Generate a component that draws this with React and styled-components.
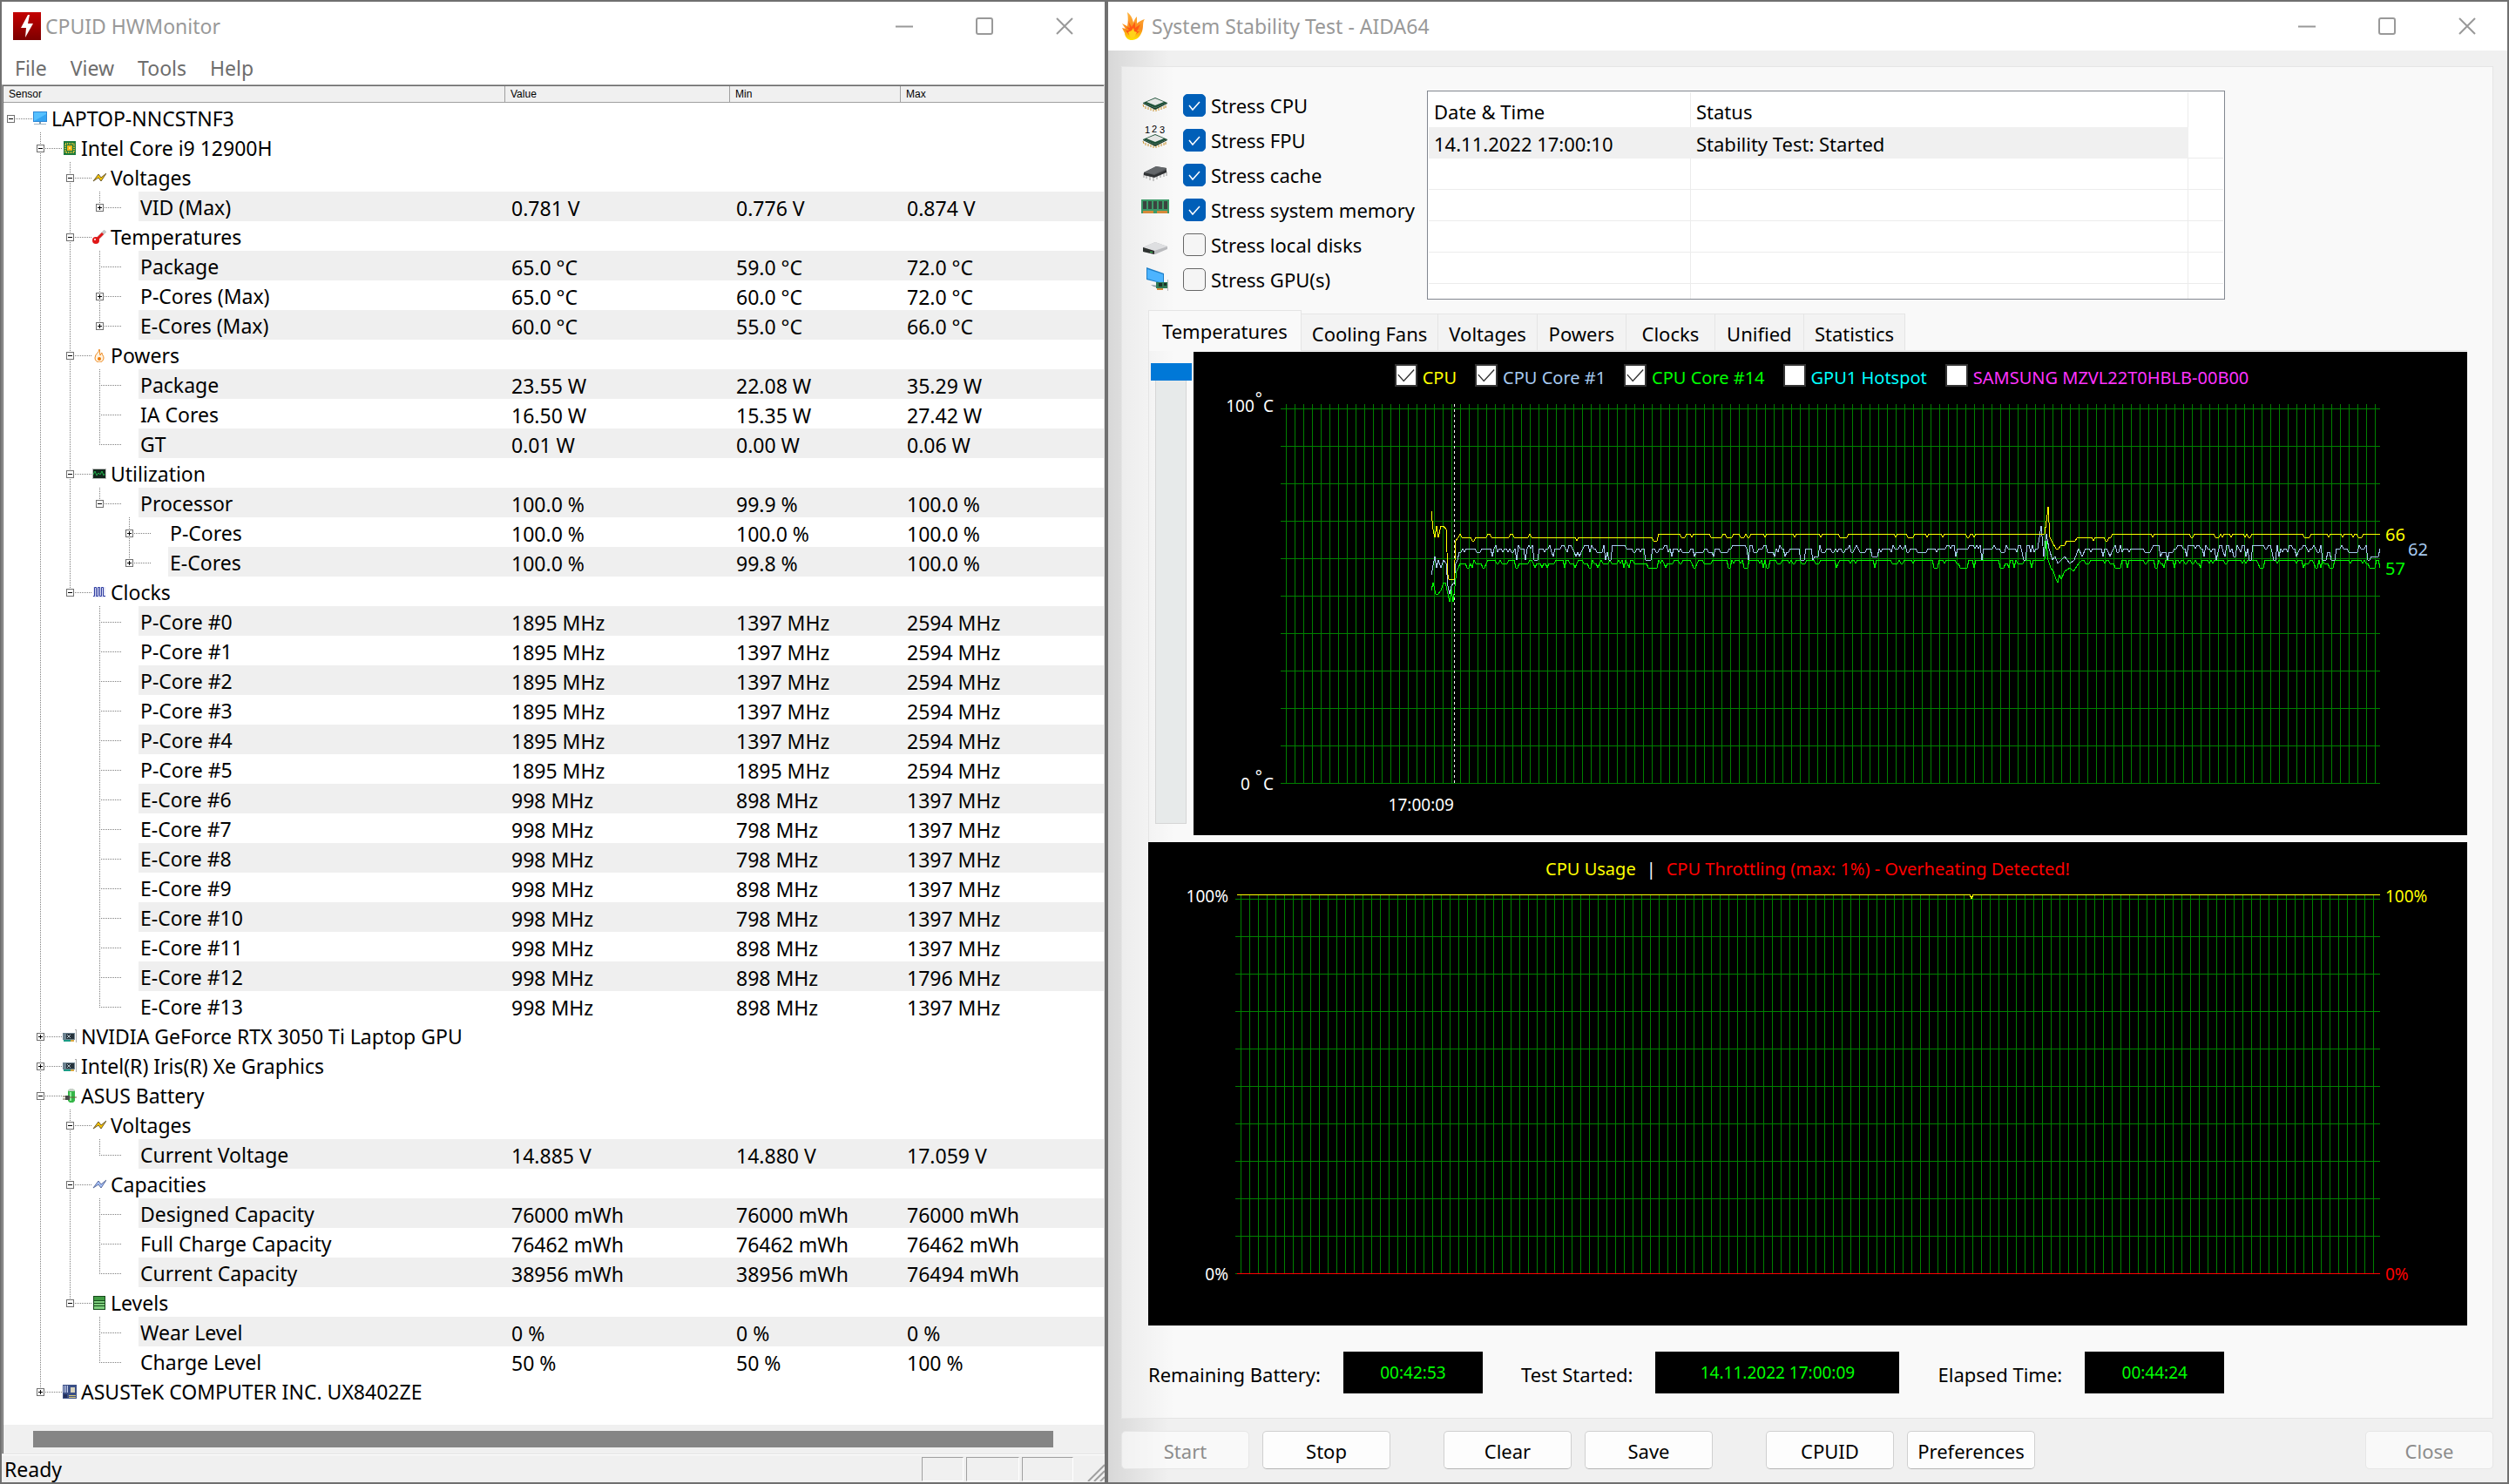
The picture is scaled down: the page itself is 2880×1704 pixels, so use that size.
import React from 'react';
import styled, { createGlobalStyle, css } from 'styled-components';

const GlobalStyle = createGlobalStyle`
	* {
		box-sizing: border-box;
	}

	body {
		margin: 0;
		background: #707070;
		color: #000;
		font-family: 'Noto Sans', 'Open Sans', sans-serif;
		font-size: 22px;
		line-height: 28px;
	}

	button,
	input {
		font: inherit;
		color: inherit;
		margin: 0;
	}
`;

/* ---------- shared window parts ---------- */

const Desktop = styled.main`
	display: grid;
	grid-template-columns: 1270fr 1610fr;
	min-height: 100vh;
`;

const Window = styled.section`
	display: flex;
	flex-direction: column;
	min-width: 0;
	border: 2px solid #707070;
	background: ${props => props.$bg};
`;

const TitleBar = styled.header`
	display: flex;
	align-items: center;
	height: 56px;
	padding-left: ${props => props.$pad}px;
	background: #fff;

	h1 {
		flex: 1;
		margin: 0 0 0 ${props => props.$gap}px;
		font-size: 23px;
		font-weight: 400;
		color: #999;
	}
`;

const CaptionButton = styled.button`
	width: 92px;
	height: 54px;
	padding: 0;
	border: 0;
	background: none;

	svg {
		display: block;
		margin: 0 auto;
	}
`;

const captionShapes = {
	Minimize: <path d="M0 10.5h20" strokeWidth="2" />,
	Maximize: <rect x="1" y="1" width="18" height="18" rx="2" strokeWidth="2" />,
	Close: <path d="M1 1l18 18M19 1L1 19" strokeWidth="2" />,
};

function Caption({ pad, gap, icon, title }) {
	return (
		<TitleBar $pad={pad} $gap={gap}>
			{icon}
			<h1>{title}</h1>
			{Object.keys(captionShapes).map(name => (
				<CaptionButton key={name} type="button" aria-label={name}>
					<svg width="20" height="20" fill="none" stroke="#999">
						{captionShapes[name]}
					</svg>
				</CaptionButton>
			))}
		</TitleBar>
	);
}

/* ---------- HWMonitor ---------- */

const BoltLogo = () => (
	<svg width="32" height="32" viewBox="0 0 32 32">
		<defs>
			<linearGradient id="bolt" x1="0" y1="0" x2="0" y2="1">
				<stop offset="0" stopColor="#c40000" />
				<stop offset="1" stopColor="#7c0000" />
			</linearGradient>
		</defs>
		<rect width="32" height="32" fill="url(#bolt)" />
		<path d="M17 3L9 18h6l-1 11 9-16h-6l2-10z" fill="#fff" />
	</svg>
);

const zigzag = (fill, stroke) => (
	<path d="M1 12L7 4l3 4 6-5-6 9-3-4z" fill={fill} stroke={stroke} />
);

const card = (
	<>
		<path d="M14 0h2v15h-1V1h-1z" fill="#aaa" />
		<path d="M0 4h14v8H0z" fill="#6c8290" />
		<path d="M4 5h9v6H4z" fill="#26323b" />
		<path d="M5 6l4 4m0-4l-4 4" stroke="#b7c4cc" />
		<path d="M1 12h8v2H1z" fill="#1b9b85" />
		<path d="M9 12h4v2H9z" fill="#d8a640" />
	</>
);

const treeIcons = {
	computer: (
		<>
			<path d="M0 0h16v12H0z" fill="#2d87d6" />
			<path d="M1 1h14v10H1z" fill="#55c0ff" />
			<path d="M1 11L15 3v8z" fill="#35a5f2" />
			<path d="M7 12h2v2H7z" fill="#7f99ab" />
			<path d="M1 14h14v1H1z" fill="#9fb5c4" />
		</>
	),
	cpu: (
		<>
			<path d="M1 0h14v16H1z" fill="#1d7a3c" />
			<path d="M3 3h10v10H3z" fill="none" stroke="#d9c53c" strokeWidth="2" strokeDasharray="1 1" />
			<path d="M5 5h6v6H5z" fill="#f2b416" />
			<path d="M7 7h2v2H7z" fill="#fbe17b" />
		</>
	),
	volt: zigzag('#ffc800', '#6b5a2c'),
	capacity: zigzag('#a9c4ff', '#57699a'),
	temp: (
		<>
			<path d="M15 1L7 9" stroke="#c9c9c9" strokeWidth="4" />
			<path d="M12 4L5 11" stroke="#e01818" strokeWidth="3" />
			<circle cx="4" cy="12" r="4" fill="#e01818" />
			<circle cx="3" cy="11" r="1" fill="#fff" />
		</>
	),
	power: (
		<>
			<path
				d="M8 1c0 4-5 5-5 10a5 5 0 0 0 10 0c0-3-2-3-2-6-2 1-1 3-2 3-1-2 0-4-1-7z"
				fill="#fff3e0"
				stroke="#ee8a20"
			/>
			<circle cx="8" cy="12" r="2" fill="#f07800" />
		</>
	),
	usage: (
		<>
			<path d="M0 2h16v12H0z" fill="#bdbdbd" />
			<path d="M1 3h14v10H1z" fill="#12261c" />
			<path d="M1 9l2-4 2 5 2-3 2 2 2-4 2 5 1-2" fill="none" stroke="#1fb24a" />
		</>
	),
	clock: (
		<>
			<path d="M1 2h14v12H1z" fill="#e4e6f8" />
			<path
				d="M1 12.5h1.5v-10h2v10h2v-10h2v10h2v-10h2v10H15"
				fill="none"
				stroke="#2c3a9e"
			/>
		</>
	),
	gpu: card,
	battery: (
		<>
			<path d="M7 1h6l1 2v11l-2 2H8l-2-2V3z" fill="#35b548" />
			<path d="M8 0h4l2 3H6z" fill="#c8d0c8" />
			<path d="M8 4h2v10H8z" fill="#8ff09a" />
			<path d="M3 8h5v5H3z" fill="#4a4a4a" />
			<path d="M0 9h3M0 12h3M8 10h8" stroke="#6b5a3a" />
		</>
	),
	levels: (
		<>
			<path d="M1 0h14v16H1z" fill="#164a1b" />
			<path d="M2 1h12v4H2z" fill="#3f9a42" />
			<path d="M2 6h12v2H2zm0 3h12v2H2zm0 3h12v3H2z" fill="#7fd07e" />
		</>
	),
	board: (
		<>
			<path d="M0 0h16v16H0z" fill="#3b4f86" />
			<path d="M1 1h1v8H1zm2 0h1v8H3zm2 0h1v8H5z" fill="#c9d3ef" />
			<path d="M9 3h5v6H9z" fill="#d8d3bd" />
			<path d="M1 11h4v4H1z" fill="#22305c" />
			<path d="M7 12h8v1H7zm0 2h8v1H7z" fill="#d9c97a" />
		</>
	),
};

const clockRow = (name, value, min, max) => ({
	name,
	values: [`${value} MHz`, `${min} MHz`, `${max} MHz`],
});

const sensors = {
	name: 'LAPTOP-NNCSTNF3',
	icon: 'computer',
	children: [
		{
			name: 'Intel Core i9 12900H',
			icon: 'cpu',
			children: [
				{
					name: 'Voltages',
					icon: 'volt',
					children: [{ name: 'VID (Max)', folded: true, values: ['0.781 V', '0.776 V', '0.874 V'] }],
				},
				{
					name: 'Temperatures',
					icon: 'temp',
					children: [
						{ name: 'Package', values: ['65.0 °C', '59.0 °C', '72.0 °C'] },
						{ name: 'P-Cores (Max)', folded: true, values: ['65.0 °C', '60.0 °C', '72.0 °C'] },
						{ name: 'E-Cores (Max)', folded: true, values: ['60.0 °C', '55.0 °C', '66.0 °C'] },
					],
				},
				{
					name: 'Powers',
					icon: 'power',
					children: [
						{ name: 'Package', values: ['23.55 W', '22.08 W', '35.29 W'] },
						{ name: 'IA Cores', values: ['16.50 W', '15.35 W', '27.42 W'] },
						{ name: 'GT', values: ['0.01 W', '0.00 W', '0.06 W'] },
					],
				},
				{
					name: 'Utilization',
					icon: 'usage',
					children: [
						{
							name: 'Processor',
							values: ['100.0 %', '99.9 %', '100.0 %'],
							children: [
								{ name: 'P-Cores', folded: true, values: ['100.0 %', '100.0 %', '100.0 %'] },
								{ name: 'E-Cores', folded: true, values: ['100.0 %', '99.8 %', '100.0 %'] },
							],
						},
					],
				},
				{
					name: 'Clocks',
					icon: 'clock',
					children: [
						clockRow('P-Core #0', 1895, 1397, 2594),
						clockRow('P-Core #1', 1895, 1397, 2594),
						clockRow('P-Core #2', 1895, 1397, 2594),
						clockRow('P-Core #3', 1895, 1397, 2594),
						clockRow('P-Core #4', 1895, 1397, 2594),
						clockRow('P-Core #5', 1895, 1895, 2594),
						clockRow('E-Core #6', 998, 898, 1397),
						clockRow('E-Core #7', 998, 798, 1397),
						clockRow('E-Core #8', 998, 798, 1397),
						clockRow('E-Core #9', 998, 898, 1397),
						clockRow('E-Core #10', 998, 798, 1397),
						clockRow('E-Core #11', 998, 898, 1397),
						clockRow('E-Core #12', 998, 898, 1796),
						clockRow('E-Core #13', 998, 898, 1397),
					],
				},
			],
		},
		{ name: 'NVIDIA GeForce RTX 3050 Ti Laptop GPU', icon: 'gpu', folded: true },
		{ name: 'Intel(R) Iris(R) Xe Graphics', icon: 'gpu', folded: true },
		{
			name: 'ASUS Battery',
			icon: 'battery',
			children: [
				{
					name: 'Voltages',
					icon: 'volt',
					children: [{ name: 'Current Voltage', values: ['14.885 V', '14.880 V', '17.059 V'] }],
				},
				{
					name: 'Capacities',
					icon: 'capacity',
					children: [
						{ name: 'Designed Capacity', values: ['76000 mWh', '76000 mWh', '76000 mWh'] },
						{ name: 'Full Charge Capacity', values: ['76462 mWh', '76462 mWh', '76462 mWh'] },
						{ name: 'Current Capacity', values: ['38956 mWh', '38956 mWh', '76494 mWh'] },
					],
				},
				{
					name: 'Levels',
					icon: 'levels',
					children: [
						{ name: 'Wear Level', values: ['0 %', '0 %', '0 %'] },
						{ name: 'Charge Level', values: ['50 %', '50 %', '100 %'] },
					],
				},
			],
		},
		{ name: 'ASUSTeK COMPUTER INC. UX8402ZE', icon: 'board', folded: true },
	],
};

// depth-first list of rows; guides holds one flag per ancestor level
function flatten(node, guides = [], last = true, root = true) {
	const row = { ...node, guides, last, root };
	const kids = node.children || [];
	const next = root ? [] : [...guides, !last];
	return [
		row,
		...kids.flatMap((kid, i) => flatten(kid, root ? [false] : next, i === kids.length - 1, false)),
	];
}

const rows = flatten(sensors);

const MenuBar = styled.nav`
	display: flex;
	align-items: center;
	gap: 23px;
	height: 37px;
	padding: 2px 0 0 13px;
	font-size: 23px;

	button {
		padding: 0 2px;
		border: 0;
		background: none;
		color: #6d6d6d;
	}
`;

const TreePane = styled.div`
	flex: 1;
	display: flex;
	flex-direction: column;
	margin-top: 2px;
	border: solid #a0a0a0;
	border-width: 1px 0 0 1px;
	border-right: 1px solid #e3e3e3;
	box-shadow: inset 1px 1px 0 #696969;
	padding: 1px 0 0 1px;
`;

const SensorTable = styled.table`
	width: 100%;
	table-layout: fixed;
	border-collapse: separate;
	border-spacing: 0;
	font-size: 23px;

	th {
		height: 19px;
		padding: 0 6px;
		border-right: 1px solid #a0a0a0;
		border-bottom: 1px solid #a0a0a0;
		background: #f0f0f0;
		font: 12px/16px 'Liberation Sans', Arial, sans-serif;
		text-align: left;
	}

	th:last-child {
		border-right: 0;
	}

	td {
		height: 34px;
		padding: 3px 7px 0;
		line-height: 30px;
		white-space: nowrap;
	}
`;

const SensorRow = styled.tr`
	td:not(:first-child) {
		background: ${props => (props.$shaded ? '#efefef' : '#fff')};
	}

	&& td:first-child {
		padding: 0;
	}
`;

const SensorName = styled.div`
	display: flex;
	height: 34px;
`;

const Label = styled.span`
	flex: 1;
	margin-left: 3px;
	padding: 3px 0 0 2px;
	line-height: 30px;
	background: ${props => (props.$shaded ? '#efefef' : 'none')};
`;

const dots = dir => `repeating-linear-gradient(${dir}, #808080 0 1px, transparent 1px 2px)`;

const Guide = styled.span`
	flex: 0 0 34px;
	background: ${props => (props.$line ? dots('to bottom') : 'none')} 8px 0 / 1px 34px no-repeat;
`;

const Branch = styled.span`
	flex: 0 0 34px;
	padding: 14px 0 0 4px;
	background: ${dots('to right')} 8px 18px / 25px 1px no-repeat,
		${dots('to bottom')} 8px 0 / 1px ${props => props.$drop}px no-repeat;

	${props =>
		props.$root &&
		css`
			background: ${dots('to right')} 14px 18px / 19px 1px no-repeat;
		`}
`;

const Toggle = styled.button`
	display: block;
	width: 9px;
	height: 9px;
	padding: 0;
	border: 0;

	svg {
		display: block;
	}
`;

const TreeIcon = styled.svg`
	flex: 0 0 16px;
	height: 16px;
	margin-top: 10px;
`;

function Row({ row, index }) {
	const shaded = Boolean(row.values) && index % 2 === 1;
	const values = row.values || ['', '', ''];
	return (
		<SensorRow $shaded={shaded}>
			<td>
				<SensorName>
					{row.guides.map((line, i) => (
						<Guide key={i} $line={line} />
					))}
					<Branch $drop={row.last ? 19 : 34} $root={row.root}>
						{(row.children || row.folded) && (
							<Toggle type="button" aria-label={row.folded ? 'Expand' : 'Collapse'}>
								<svg width="9" height="9" shapeRendering="crispEdges">
									<path d="M.5 .5h8v8h-8z" fill="#fff" stroke="#707070" />
									<path d={row.folded ? 'M2 4.5h5M4.5 2v5' : 'M2 4.5h5'} stroke="#000" />
								</svg>
							</Toggle>
						)}
					</Branch>
					<TreeIcon viewBox="0 0 16 16">{row.icon && treeIcons[row.icon]}</TreeIcon>
					<Label $shaded={shaded}>{row.name}</Label>
				</SensorName>
			</td>
			{values.map((value, i) => (
				<td key={i}>{value}</td>
			))}
		</SensorRow>
	);
}

const ScrollTrack = styled.div`
	margin-top: auto;
	height: 33px;
	padding: 7px 58px 7px 34px;
	background: #f0f0f0;
`;

const ScrollThumb = styled.div`
	height: 19px;
	background: #858585;
`;

const StatusBar = styled.footer`
	display: flex;
	gap: 3px;
	height: 33px;
	padding: 3px 0 1px 3px;
	border-top: 1px solid #e3e3e3;
	box-shadow: inset 0 1px 0 #fff;
	background: #f0f0f0;
	font-size: 23px;

	p {
		flex: 1;
		margin: 0;
	}

	svg {
		align-self: flex-end;
		margin-left: 13px;
	}
`;

const StatusCell = styled.span`
	width: ${props => props.$width}px;
	border: 1px solid #a0a0a0;
	border-right-color: #fff;
	border-bottom-color: #fff;
`;

function HardwareMonitor() {
	return (
		<Window $bg="#fff">
			<Caption pad={13} gap={5} icon={<BoltLogo />} title="CPUID HWMonitor" />
			<MenuBar>
				<button type="button">File</button>
				<button type="button">View</button>
				<button type="button">Tools</button>
				<button type="button">Help</button>
			</MenuBar>
			<TreePane>
				<SensorTable>
					<colgroup>
						<col style={{ width: 576 }} />
						<col style={{ width: 258 }} />
						<col style={{ width: 196 }} />
						<col />
					</colgroup>
					<thead>
						<tr>
							<th>Sensor</th>
							<th>Value</th>
							<th>Min</th>
							<th>Max</th>
						</tr>
					</thead>
					<tbody>
						{rows.map((row, i) => (
							<Row key={i} row={row} index={i} />
						))}
					</tbody>
				</SensorTable>
				<ScrollTrack>
					<ScrollThumb />
				</ScrollTrack>
			</TreePane>
			<StatusBar>
				<p>Ready</p>
				<StatusCell $width={48} />
				<StatusCell $width={61} />
				<StatusCell $width={59} />
				<svg width="20" height="20" stroke="#a0a0a0" strokeWidth="2">
					<path d="M1 20L20 1M8 20L20 8M15 20l5-5" />
				</svg>
			</StatusBar>
		</Window>
	);
}

/* ---------- System Stability Test ---------- */

const FlameLogo = () => (
	<svg width="26" height="32" viewBox="0 0 26 32">
		<defs>
			<linearGradient id="flame" x1="0" y1="0" x2="0" y2="1">
				<stop offset="0" stopColor="#ffb43c" />
				<stop offset=".6" stopColor="#f98a1c" />
				<stop offset="1" stopColor="#ffe600" />
			</linearGradient>
		</defs>
		<path
			d="M6 0c5 4 6 8 7 12 1-3 2-5 4-7v8c2-2 5-4 9-5-3 4-1 8-3 14-2 5-4 9-11 10C7 33 3 28 3 24L0 18l4 1-4-6 6 3C7 11 7 5 6 0z"
			fill="url(#flame)"
		/>
		<path d="M7 10l4 7 4-6v7l6-4-4 8 3 0-6 5-6-1-4-5 4 0-3-4 4 1z" fill="#ff5a14" />
		<path d="M7 23l4-2 2-3 1 4 3 1-3 6-4 1z" fill="#ffd21a" />
	</svg>
);

const chip = (
	<>
		<path d="M2 19l1 3m2-1v3m3-2v3m3-2v3m3-2v3m3-3v3m3-4v3m3-4v3m3-4v3m2-4v3" stroke="#c8912c" />
		<path d="M2 17l14-6 14 6-14 6z" fill="#1f5138" />
		<path d="M2 17l14 6 14-6v1l-14 7-14-7z" fill="#173d2a" />
		<path d="M6 16l10-4 10 4-10 4z" fill="#e4e6e4" />
	</>
);

const digitFont = { fontFamily: 'Liberation Sans, Arial, sans-serif', fontSize: 11 };

const stressIcons = {
	cpu: chip,
	fpu: (
		<>
			<g transform="translate(0 2)">{chip}</g>
			<g {...digitFont}>
				<text x="4" y="12">1</text>
				<text x="12" y="11">2</text>
				<text x="21" y="12">3</text>
			</g>
		</>
	),
	cache: (
		<>
			<path d="M3 18v5m3-4v5m4-4v6m4-6v7m4-8v6m4-7v5m4-6v5m3-6v5" stroke="#999" />
			<path d="M3 17L17 10l12 2v4l-14 6-12-2z" fill="#55585b" />
			<path d="M3 17l12 3 14-6v3l-14 6-12-3z" fill="#303234" />
			<path d="M17 10l12 2-14 7-12-2z" fill="#64676a" />
		</>
	),
	memory: (
		<>
			<path d="M0 8h32v16H0z" fill="#3c9a68" />
			<path d="M2 10h4v9H2zm6 0h4v9H8zm6 0h4v9h-4zm6 0h4v9h-4zm6 0h4v9h-4z" fill="#3b4440" />
			<path d="M2 21h12v3H2zm16 0h12v3H18z" fill="#d68a3a" />
		</>
	),
	disk: (
		<>
			<path d="M2 23l14-6 14 5v3l-14 6-14-3z" fill="#b9babd" />
			<path d="M2 23l14-6 14 5-15 5z" fill="#dedfe1" />
			<path d="M2 23l13 4v4L2 28z" fill="#2e3230" />
			<path d="M10 28h3v1h-3z" fill="#3fd05a" />
		</>
	),
	gpu: (
		<>
			<path d="M6 6l20 7v12L6 20z" fill="#1e7fc8" />
			<path d="M7 8l18 6v10L7 19z" fill="#4cb4ff" />
			<path d="M11 26l8 1v2l-5-1z" fill="#8a98a2" />
			<path d="M17 23h13v7H17z" fill="#2f7a55" />
			<path d="M20 24h4v4h-4zm6 0h3v3h-3z" fill="#1d3328" />
			<path d="M18 30h7v2h-7z" fill="#d68a3a" />
			<path d="M30 20h1v13h-1z" fill="#bbb" />
		</>
	),
};

const stressOptions = [
	{ id: 'cpu', label: 'Stress CPU', on: true },
	{ id: 'fpu', label: 'Stress FPU', on: true },
	{ id: 'cache', label: 'Stress cache', on: true },
	{ id: 'memory', label: 'Stress system memory', on: true },
	{ id: 'disk', label: 'Stress local disks', on: false },
	{ id: 'gpu', label: 'Stress GPU(s)', on: false },
];

const tick = (color, d) =>
	`url("data:image/svg+xml,%3Csvg xmlns='http://www.w3.org/2000/svg' viewBox='0 0 24 24'%3E%3Cpath d='${d}' fill='none' stroke='${color}' stroke-width='1.5'/%3E%3C/svg%3E")`;

const TestBody = styled.div`
	flex: 1;
	display: flex;
	flex-direction: column;
	padding: 18px 16px 15px 15px;
	background:
		linear-gradient(to right, rgba(0, 0, 0, 0.1), rgba(0, 0, 0, 0) 70px),
		#f0f0f0;
`;

const Panel = styled.div`
	flex: 1;
	padding: 24px 29px 0 22px;
	border: 1px solid #e5e5e5;
	background:
		linear-gradient(to right, rgba(0, 0, 0, 0.05), rgba(0, 0, 0, 0) 60px),
		#f9f9f9;
`;

const Setup = styled.div`
	display: flex;
	align-items: flex-start;
`;

const StressList = styled.div`
	flex: 0 0 328px;
`;

const StressOption = styled.label`
	display: flex;
	align-items: center;
	height: 40px;
	white-space: nowrap;

	svg {
		align-self: flex-start;
		flex: none;
		margin-right: 16px;
	}

	input {
		appearance: none;
		flex: none;
		width: 26px;
		height: 26px;
		margin-right: 6px;
		border: 1px solid #666;
		border-radius: 5px;
		background: #f5f5f5;
	}

	input:checked {
		border-color: #005fb8;
		background: ${tick('white', 'M6 12l4 5 8-9')} #005fb8;
	}
`;

const LogFrame = styled.div`
	flex: 0 1 916px;
	height: 240px;
	margin-top: 3px;
	padding: 1px;
	overflow: hidden;
	border: 1px solid #828790;
	background: #fff;
`;

const Log = styled.table`
	width: 100%;
	table-layout: fixed;
	border-collapse: separate;
	border-spacing: 0;

	th,
	td {
		height: 36px;
		padding: 3px 6px 0;
		border-right: 1px solid #ececec;
		border-bottom: 1px solid #ececec;
		font-weight: 400;
		text-align: left;
	}

	th {
		height: 40px;
		border-bottom: 0;
	}

	th:last-child,
	td:last-child {
		border-right: 0;
	}

	.selected td:not(:last-child) {
		border-color: #f0f0f0;
		background: #f0f0f0;
	}
`;

const TabList = styled.div`
	display: flex;
	align-items: flex-end;
	height: 46px;
	margin: 12px 0 0 8px;
`;

const Tab = styled.button`
	min-width: 102px;
	height: 42px;
	padding: 3px 12px 0;
	border: 1px solid #e5e5e5;
	border-width: 1px 1px 0 0;
	background: #f3f3f3;

	&[aria-selected='true'] {
		z-index: 1;
		height: 47px;
		margin-bottom: -1px;
		padding: 0 15px;
		border-left-width: 1px;
		background: #f9f9f9;
	}
`;

const TabPanel = styled.div`
	display: flex;
	height: 565px;
	margin-left: 8px;
	padding: 1px 0 8px 1px;
	border: solid #e5e5e5;
	border-width: 1px 0 0 1px;
`;

const ZoomSlider = styled.input`
	appearance: none;
	writing-mode: vertical-lr;
	flex: none;
	width: 47px;
	height: 529px;
	margin: 13px 3px 0 0;
	background: none;

	&::-webkit-slider-runnable-track {
		width: 36px;
		height: 529px;
		border: 1px solid #d6d6d6;
		background: #e7eaea;
	}

	&::-webkit-slider-thumb {
		appearance: none;
		width: 47px;
		height: 20px;
		margin: -1px 0 0 -6px;
		background: #0078d7;
	}
`;

const Chart = styled.figure`
	flex: 1;
	min-width: 0;
	height: 555px;
	margin: ${props => props.$margin || 0};
	background: #000;
	color: #fff;
	font-size: 19px;
`;

const Legend = styled.div`
	display: flex;
	justify-content: center;
	gap: 21px;
	height: 60px;
	padding: 14px 20px 0 0;
	font-size: 20px;
`;

const LegendItem = styled.label`
	display: flex;
	align-items: flex-start;
	gap: 6px;
	line-height: 32px;
	color: ${props => props.$color};

	input {
		appearance: none;
		width: 26px;
		height: 26px;
		border: 2px solid #333;
		background: #fff;
	}

	input:checked {
		background: ${tick('%23333', 'M2 11l7 8L22 5')} #fff;
	}
`;

const ChartTitle = styled.figcaption`
	display: flex;
	justify-content: center;
	gap: 12px;
	height: 60px;
	padding-top: 17px;
	font-size: 20px;

	.usage {
		color: #ff0;
	}

	.throttling {
		color: #f00;
	}
`;

const PlotRow = styled.div`
	display: grid;
	grid-template-columns: 100px minmax(0, 1fr) 100px;
	height: 436px;

	svg {
		display: block;
		width: 100%;
		height: 436px;
	}
`;

const Axis = styled.div`
	display: flex;
	flex-direction: column;
	justify-content: space-between;
	margin: -12px 0 -14px;
	padding: ${props => (props.$side === 'left' ? '0 8px 0 0' : '0 0 0 6px')};
	text-align: ${props => (props.$side === 'left' ? 'right' : 'left')};

	.degree {
		padding: 0 1px;
		line-height: 0;
		vertical-align: 8px;
	}

	.usage {
		color: #ff0;
	}

	.throttling {
		color: #f00;
	}
`;

const Readings = styled.div`
	position: relative;
	font-size: 20px;
`;

// current value, floating beside the end of its line
const Reading = styled.span`
	position: absolute;
	left: ${props => (props.$outer ? 32 : 6)}px;
	margin-top: -13px;
	color: ${props => props.$color};
`;

const TimeMark = styled.time`
	display: block;
	width: 299px;
	padding-top: 10px;
	text-align: right;
`;

const PLOT_W = 1262;
const DEGREE = 4.34;
const yOf = celsius => Math.round(435 - celsius * DEGREE);

function random(seed) {
	let s = seed;
	return () => {
		s = (s * 16807) % 2147483647;
		return s / 2147483647;
	};
}

const toPoints = list => list.map(([x, v]) => `${x},${yOf(v)}`).join(' ');

function drift(seed, from, to, pick) {
	const next = random(seed);
	const out = [];
	let value = pick(from, next);
	for (let x = from; x <= to; x += 2) {
		if (next() < 0.65) value = pick(x, next);
		out.push([x, value]);
	}
	return out;
}

const oneOf = (list, r) => list[Math.floor(r() * list.length)];

const packageLine = (x, r) => {
	if (x < 430) return r() < 0.1 ? oneOf([64, 66], r) : 65;
	if (x < 600) return oneOf([65, 66, 66], r);
	if (x > 915 && x < 955) return r() < 0.15 ? 64 : 65;
	return r() < 0.16 ? 65 : 66;
};
const pCoreLine = (x, r) => oneOf([62, 62, 62, 61, 61, 63, 60, 61, 63, 62, 59, 62], r);
const eCoreLine = (x, r) => (x < 430 ? oneOf([58, 58, 58, 58, 59, 57, 57, 59, 58], r) : oneOf([59, 59, 59, 59, 59, 58, 58, 59, 57], r));

const series = [
	{
		color: '#00ff00',
		points: [
			[173, 51], [175, 53], [178, 50], [181, 50], [184, 51], [187, 53], [189, 53], [192, 50], [194, 48], [196, 51],
			[198, 48], [200, 52], [202, 56], [204, 57],
			...drift(91, 206, 876, eCoreLine),
			[878, 60], [879, 64], [881, 59], [884, 57], [887, 56], [890, 54], [892, 53], [894, 55], [896, 54], [900, 56],
			[906, 57], [910, 56], [916, 58],
			...drift(57, 920, 1258, eCoreLine),
			[1260, 59], [1262, 57],
		],
	},
	{
		color: '#a6caf0',
		points: [
			[173, 55], [177, 60], [179, 57], [181, 59], [184, 57], [187, 59], [190, 58], [192, 52], [194, 50], [196, 52],
			[199, 53], [201, 58], [203, 59],
			...drift(23, 205, 870, pCoreLine),
			[873, 68], [876, 60], [879, 66], [882, 62], [886, 59], [889, 60], [892, 58], [896, 59], [900, 60], [906, 58],
			[911, 59], [916, 62], [920, 60],
			...drift(77, 924, 1260, pCoreLine),
			[1262, 62],
		],
	},
	{
		color: '#ffff00',
		points: [
			[173, 72], [175, 67], [177, 65], [179, 68], [181, 65], [184, 68], [187, 68], [190, 67], [192, 55], [193, 54],
			[199, 54], [201, 64], [204, 65],
			...drift(11, 206, 874, packageLine),
			[877, 66], [880, 71], [881, 73], [883, 65], [885, 64], [890, 62], [893, 62], [896, 63], [900, 63], [902, 64],
			[912, 64], [915, 65],
			...drift(41, 917, 1260, packageLine),
			[1262, 66],
		],
	},
];

function gridPath(first, width) {
	let d = '';
	for (let x = first; x < width; x += 10) d += `M${x + 0.5} 0V436`;
	for (let y = 5; y <= 435; y += 43) d += `M0 ${y + 0.5}H${width}`;
	return d;
}

const thermals = [
	{ label: 'CPU', color: '#ff0', on: true },
	{ label: 'CPU Core #1', color: '#a6caf0', on: true },
	{ label: 'CPU Core #14', color: '#0f0', on: true },
	{ label: 'GPU1 Hotspot', color: '#0ff', on: false },
	{ label: 'SAMSUNG MZVL22T0HBLB-00B00', color: '#f3f', on: false },
];

function TemperatureChart() {
	return (
		<Chart>
			<Legend>
				{thermals.map(item => (
					<LegendItem key={item.label} $color={item.color}>
						<input type="checkbox" defaultChecked={item.on} />
						{item.label}
					</LegendItem>
				))}
			</Legend>
			<PlotRow>
				<Axis $side="left">
					<span>
						100<span className="degree">°</span>C
					</span>
					<span>
						0 <span className="degree">°</span>C
					</span>
				</Axis>
				<svg viewBox={`0 0 ${PLOT_W} 436`} preserveAspectRatio="none" fill="none" shapeRendering="crispEdges">
					<path d={gridPath(6, PLOT_W)} stroke="#008000" />
					<path d="M199.5 0V436" stroke="#fff" strokeDasharray="3 3" />
					{series.map(line => (
						<polyline key={line.color} points={toPoints(line.points)} stroke={line.color} />
					))}
				</svg>
				<Readings>
					<Reading $color="#ff0" style={{ top: yOf(66) }}>66</Reading>
					<Reading $color="#a6caf0" $outer style={{ top: yOf(62) }}>62</Reading>
					<Reading $color="#0f0" style={{ top: yOf(57) }}>57</Reading>
				</Readings>
			</PlotRow>
			<TimeMark>17:00:09</TimeMark>
		</Chart>
	);
}

function UsageChart() {
	return (
		<Chart $margin="0 0 0 8px">
			<ChartTitle>
				<span className="usage">CPU Usage</span>
				<span>|</span>
				<span className="throttling">CPU Throttling (max: 1%) - Overheating Detected!</span>
			</ChartTitle>
			<PlotRow>
				<Axis $side="left">
					<span>100%</span>
					<span>0%</span>
				</Axis>
				<svg viewBox="0 0 1314 436" preserveAspectRatio="none" fill="none" shapeRendering="crispEdges">
					<path d={gridPath(6, 1314)} stroke="#008000" />
					<path d="M2 .5H843l2 4 2-4H1314" stroke="#ff0" />
					<path d="M2 435.5H1314" stroke="#f00" />
				</svg>
				<Axis $side="right">
					<span className="usage">100%</span>
					<span className="throttling">0%</span>
				</Axis>
			</PlotRow>
		</Chart>
	);
}

const Timers = styled.dl`
	display: flex;
	align-items: center;
	gap: 44px;
	margin: 30px 0 0 8px;

	div {
		display: flex;
		align-items: center;
		gap: 26px;
	}

	dt {
		padding-top: 3px;
		white-space: nowrap;
	}

	dd {
		width: 160px;
		margin: 0;
		background: #000;
		color: #0f0;
		font-size: 19px;
		line-height: 48px;
		text-align: center;
	}

	dd.wide {
		width: 280px;
	}
`;

const Actions = styled.footer`
	display: flex;
	gap: 15px;
	padding-top: 14px;
`;

const ActionButton = styled.button`
	width: 147px;
	height: 44px;
	margin-left: ${props => (props.$gap ? '46px' : 0)};
	padding: 2px 0 0;
	border: 1px solid #d0d0d0;
	border-bottom-color: #b5b5b5;
	border-radius: 5px;
	background: #fdfdfd;

	&:last-child {
		margin-left: auto;
	}

	&:disabled {
		border-color: #e6e6e6;
		background: rgba(255, 255, 255, 0.6);
		color: #8c8c8c;
	}
`;

function StabilityTest() {
	return (
		<Window $bg="#f0f0f0">
			<Caption pad={16} gap={8} icon={<FlameLogo />} title="System Stability Test - AIDA64" />
			<TestBody>
				<Panel>
					<Setup>
						<StressList>
							{stressOptions.map(option => (
								<StressOption key={option.id}>
									<svg width="32" height="34" viewBox="0 0 32 34">
										{stressIcons[option.id]}
									</svg>
									<input type="checkbox" defaultChecked={option.on} />
									{option.label}
								</StressOption>
							))}
						</StressList>
						<LogFrame>
							<Log>
								<colgroup>
									<col style={{ width: 301 }} />
									<col />
									<col style={{ width: 40 }} />
								</colgroup>
								<thead>
									<tr>
										<th>Date &amp; Time</th>
										<th>Status</th>
										<th aria-label="Spare" />
									</tr>
								</thead>
								<tbody>
									<tr className="selected">
										<td>14.11.2022 17:00:10</td>
										<td>Stability Test: Started</td>
										<td />
									</tr>
									{[1, 2, 3, 4, 5].map(n => (
										<tr key={n}>
											<td />
											<td />
											<td />
										</tr>
									))}
								</tbody>
							</Log>
						</LogFrame>
					</Setup>
					<TabList role="tablist">
						{['Temperatures', 'Cooling Fans', 'Voltages', 'Powers', 'Clocks', 'Unified', 'Statistics'].map((name, i) => (
							<Tab key={name} type="button" role="tab" aria-selected={i === 0}>
								{name}
							</Tab>
						))}
					</TabList>
					<TabPanel role="tabpanel">
						<ZoomSlider type="range" min="0" max="100" defaultValue="0" aria-label="Time scale" />
						<TemperatureChart />
					</TabPanel>
					<UsageChart />
					<Timers>
						<div>
							<dt>Remaining Battery:</dt>
							<dd>00:42:53</dd>
						</div>
						<div>
							<dt>Test Started:</dt>
							<dd className="wide">14.11.2022 17:00:09</dd>
						</div>
						<div>
							<dt>Elapsed Time:</dt>
							<dd>00:44:24</dd>
						</div>
					</Timers>
				</Panel>
				<Actions>
					<ActionButton type="button" disabled>Start</ActionButton>
					<ActionButton type="button">Stop</ActionButton>
					<ActionButton type="button" $gap>Clear</ActionButton>
					<ActionButton type="button">Save</ActionButton>
					<ActionButton type="button" $gap>CPUID</ActionButton>
					<ActionButton type="button">Preferences</ActionButton>
					<ActionButton type="button" disabled>Close</ActionButton>
				</Actions>
			</TestBody>
		</Window>
	);
}

export default function App() {
	return (
		<>
			<GlobalStyle />
			<Desktop>
				<HardwareMonitor />
				<StabilityTest />
			</Desktop>
		</>
	);
}
